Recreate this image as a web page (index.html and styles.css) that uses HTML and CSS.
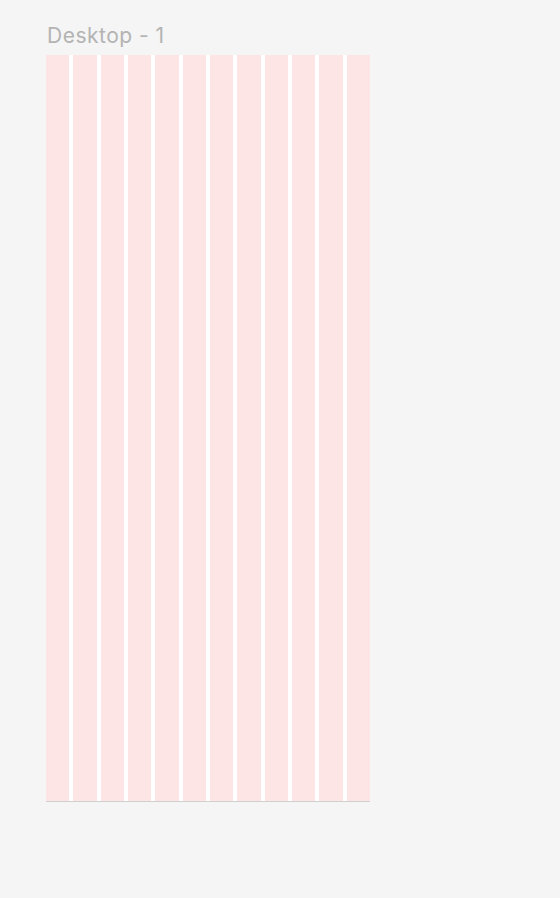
FILE: index.html
```html
<!DOCTYPE html>
<html lang="en">
<head>
  <meta charset="UTF-8" />
  <meta name="viewport" content="width=device-width, initial-scale=1.0" />
  <title>Desktop - 1</title>
  <link rel="stylesheet" href="styles.css">
</head>
<body>
  <div class="canvas">
    <div class="frame-label">Desktop - 1</div>
    <div class="frame">
      <div class="col"></div>
      <div class="col"></div>
      <div class="col"></div>
      <div class="col"></div>
      <div class="col"></div>
      <div class="col"></div>
      <div class="col"></div>
      <div class="col"></div>
      <div class="col"></div>
      <div class="col"></div>
      <div class="col"></div>
      <div class="col"></div>
    </div>
  </div>
</body>
</html>
```

FILE: styles.css
```css
html, body {
  margin: 0;
  height: 100%;
}
body {
  background-color: #f5f5f5;
  font-family: Inter, "Liberation Sans", sans-serif;
}
.canvas {
  padding: 22px 0 0 46px;
}
.frame-label {
  color: #b3b3b3;
  font-size: 21px;
  letter-spacing: 0.5px;
  line-height: 27px;
  margin-bottom: 6px;
  margin-left: 1px;
}
.frame {
  width: 324px;
  height: 746px;
  background-color: #ffffff;
  display: grid;
  grid-template-columns: repeat(12, 1fr);
  column-gap: 4px;
  box-shadow: 0 1px 0 #d0d0d0;
}
.col {
  background-color: #fce5e4;
}
```
